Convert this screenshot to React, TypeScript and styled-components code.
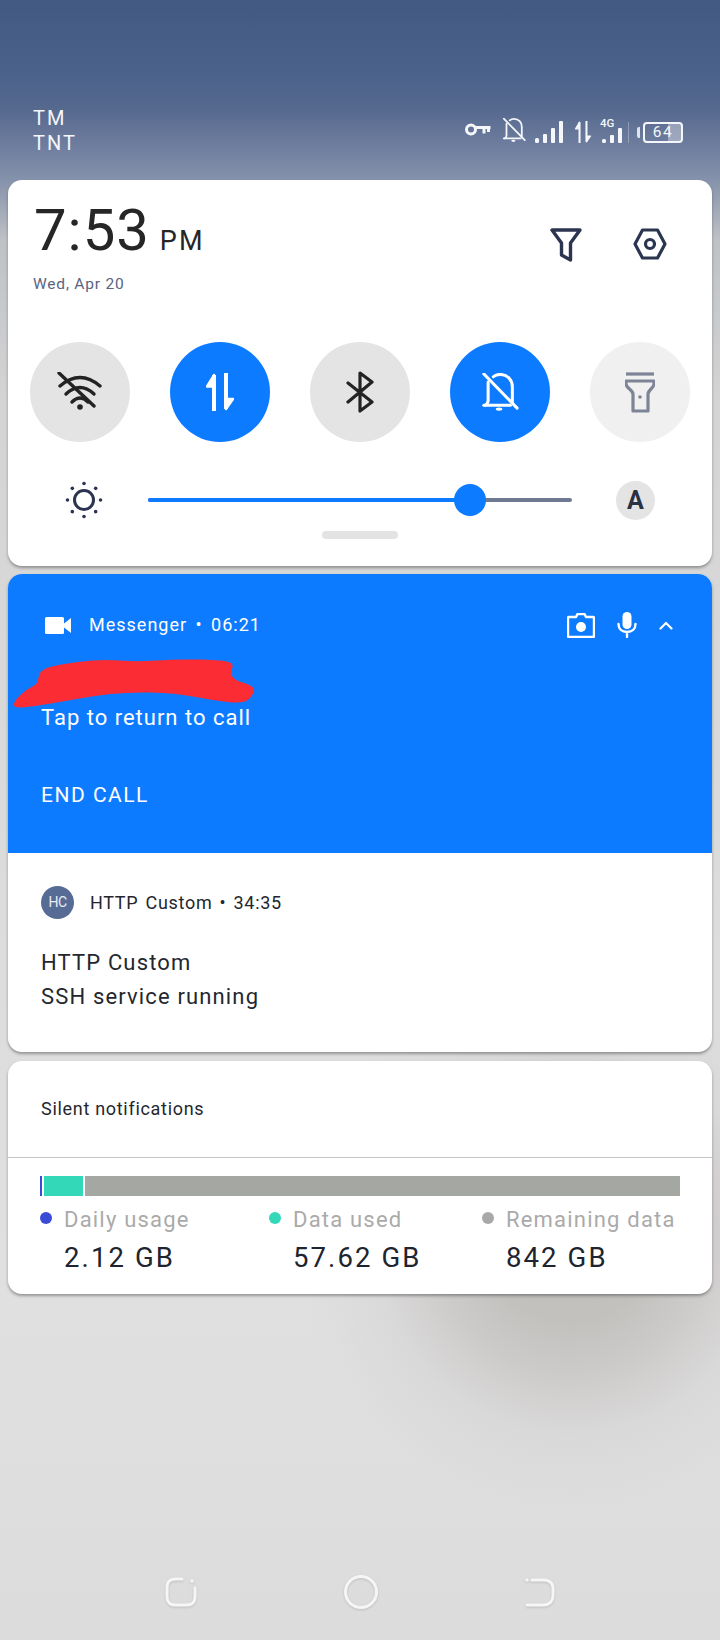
import React from "react";
import styled, { createGlobalStyle } from "styled-components";

const Global = createGlobalStyle`
  html, body { margin: 0; padding: 0; }
  body { font-family: Roboto, "Liberation Sans", sans-serif; }
`;

const Page = styled.div`
  position: relative;
  width: 720px;
  height: 1640px;
  overflow: hidden;
  display: flex;
  flex-direction: column;
  background: linear-gradient(180deg, #425a82 0, #4a6189 70px, #56698f 110px, #7180a0 150px, #8592ab 180px, #bfc1c5 240px, #d4d4d4 400px, #dcdcdc 900px, #e0e0e0 1300px, #dcdcdc 1640px);
  &::before {
    content: "";
    position: absolute;
    left: 300px;
    top: 970px;
    width: 540px;
    height: 540px;
    border-radius: 50%;
    background: radial-gradient(circle closest-side, #bebbb8 0, #c3c1be 30%, #cdcbca 50%, rgba(216, 215, 215, 0.75) 72%, rgba(222, 222, 222, 0) 100%);
  }
`;

const StatusBar = styled.header`
  position: relative;
  height: 180px;
  flex: none;
  display: flex;
  justify-content: space-between;
  align-items: flex-start;
  padding: 106px 37px 0 33px;
  box-sizing: border-box;
  color: #f4f6fa;
`;

const Carrier = styled.div`
  font-size: 20px;
  line-height: 25px;
  letter-spacing: 2px;
  font-weight: 400;
`;

const StatusIcons = styled.div`
  display: flex;
  align-items: flex-start;
  margin-top: 12px;
`;

const StatusSvg = styled.svg<{ $left: number; $top: number }>`
  display: block;
  flex: none;
  margin-left: ${(p) => p.$left}px;
  margin-top: ${(p) => p.$top}px;
`;

const Net = styled.div`
  position: relative;
  width: 20px;
  height: 25px;
  margin-left: 10px;
`;

const NetLabel = styled.span`
  display: block;
  font-size: 11.5px;
  line-height: 10px;
  font-weight: 500;
  text-align: left;
  margin-left: -2px;
`;

const Battery = styled.div`
  width: 40px;
  height: 21px;
  margin: 4px 0 0 3px;
  box-sizing: border-box;
  border: 2px solid #f4f6fa;
  border-radius: 4px;
  font-size: 15.5px;
  line-height: 17px;
  text-align: center;
  letter-spacing: 1.5px;
  background: linear-gradient(90deg, transparent 64%, rgba(255, 255, 255, 0.35) 64%);
`;

const BatteryNub = styled.div`
  width: 3px;
  height: 11px;
  margin: 9px 0 0 8px;
  border-radius: 2px 0 0 2px;
  background: #dfe3ea;
`;

const Divider = styled.div`
  width: 1px;
  height: 21px;
  margin: 4px 0 0 6px;
  background: rgba(255, 255, 255, 0.3);
`;

const Card = styled.section<{ $top: number; $height: number }>`
  position: relative;
  margin: ${(p) => p.$top}px 8px 0;
  height: ${(p) => p.$height}px;
  flex: none;
  background: #fff;
  border-radius: 14px;
  overflow: hidden;
  box-shadow: 0 2px 3px rgba(60, 60, 60, 0.45);
`;

const ClockRow = styled.div`
  display: flex;
  justify-content: space-between;
  align-items: flex-start;
  padding: 17px 0 0 26px;
  height: 78px;
  box-sizing: border-box;
`;

const Clock = styled.div`
  display: flex;
  align-items: baseline;
  color: #262626;
  font-size: 58px;
  line-height: 66px;
  font-weight: 400;
  letter-spacing: 1px;
`;

const Meridiem = styled.span`
  font-size: 27px;
  margin-left: 10px;
  letter-spacing: 2px;
  font-weight: 400;
`;

const HeaderIcons = styled.div`
  display: flex;
  gap: 51px;
  padding: 31px 45px 0 0;
`;

const DateLabel = styled.div`
  padding-left: 25px;
  margin-top: 16px;
  font-size: 15.5px;
  line-height: 20px;
  color: #5a6380;
  letter-spacing: 0.8px;
`;

const Toggles = styled.div`
  display: flex;
  justify-content: space-between;
  padding: 0 22px;
  margin-top: 48px;
`;

const Toggle = styled.div<{ $on?: boolean; $faded?: boolean }>`
  width: 100px;
  height: 100px;
  border-radius: 50%;
  display: flex;
  align-items: center;
  justify-content: center;
  background: ${(p) => (p.$on ? "#0d7bff" : p.$faded ? "#f0f0f0" : "#e4e4e4")};
`;

const BrightnessRow = styled.div`
  display: flex;
  align-items: center;
  height: 40px;
  margin-top: 38px;
  padding-left: 57px;
`;

const Slider = styled.div`
  position: relative;
  width: 424px;
  height: 4px;
  margin-left: 45px;
  border-radius: 2px;
  background: #6f7a92;
`;

const SliderFill = styled.div`
  height: 100%;
  border-radius: 2px;
  background: #0d7bff;
`;

const SliderThumb = styled.div`
  position: absolute;
  top: -14px;
  width: 32px;
  height: 32px;
  margin-left: -16px;
  border-radius: 50%;
  background: #0d7bff;
`;

const AutoBadge = styled.div`
  width: 39px;
  height: 39px;
  margin-left: 44px;
  border-radius: 50%;
  background: #e4e4e4;
  color: #2a3145;
  font-size: 25px;
  font-weight: 700;
  line-height: 39px;
  text-align: center;
`;

const Handle = styled.div`
  width: 76px;
  height: 8px;
  margin: 11px auto 0;
  border-radius: 4px;
  background: #e3e3e3;
`;

const CallPanel = styled.div`
  height: 279px;
  box-sizing: border-box;
  padding: 37px 39px 0 33px;
  background: #0d7bff;
  color: #fff;
`;

const CallHeader = styled.div`
  display: flex;
  align-items: center;
  height: 28px;
  padding-left: 4px;
`;

const AppLabel = styled.div<{ $dark?: boolean }>`
  font-size: 18px;
  line-height: 26px;
  letter-spacing: ${(p) => (p.$dark ? 0.7 : 1)}px;
  word-spacing: ${(p) => (p.$dark ? 2 : 3)}px;
  color: ${(p) => (p.$dark ? "#23262e" : "#fff")};
  margin-left: ${(p) => (p.$dark ? 16 : 18)}px;
`;

const CallActions = styled.div`
  display: flex;
  align-items: center;
  gap: 22px;
  margin-left: auto;
`;

const ScribbleMark = styled.svg`
  display: block;
  margin: 20px 0 0 -28px;
`;

const CallText = styled.div`
  font-size: 22px;
  line-height: 26px;
  letter-spacing: 1px;
  margin-top: -4px;
`;

const CallButton = styled.div`
  margin-top: 51px;
  font-size: 21px;
  line-height: 26px;
  letter-spacing: 1.5px;
`;

const ServicePanel = styled.div`
  padding: 33px 33px 0;
`;

const ServiceHeader = styled.div`
  display: flex;
  align-items: center;
`;

const Avatar = styled.div`
  width: 33px;
  height: 33px;
  border-radius: 50%;
  background: #566c95;
  color: #e9edf4;
  font-size: 14px;
  line-height: 33px;
  text-align: center;
  letter-spacing: -0.5px;
`;

const ServiceBody = styled.div`
  margin-top: 27px;
  font-size: 22px;
  line-height: 34px;
  letter-spacing: 1.15px;
  color: #24272e;
`;

const SilentTitle = styled.div`
  height: 97px;
  box-sizing: border-box;
  padding: 35px 0 0 33px;
  font-size: 18px;
  line-height: 26px;
  letter-spacing: 0.7px;
  color: #24272e;
  border-bottom: 1px solid #c4c4c4;
`;

const UsageBar = styled.div`
  display: flex;
  gap: 2px;
  height: 20px;
  margin: 18px 32px 0;
`;

const UsageSegment = styled.div<{ $width: number | string; $color: string }>`
  flex: ${(p) => (p.$width === "auto" ? "1" : `0 0 ${p.$width}px`)};
  background: ${(p) => p.$color};
`;

const Legend = styled.div`
  display: flex;
  margin-top: 10px;
  padding-left: 32px;
`;

const LegendItem = styled.div<{ $width: number }>`
  width: ${(p) => p.$width}px;
  display: grid;
  grid-template-columns: 24px auto;
  align-items: center;
`;

const Dot = styled.span<{ $color: string }>`
  width: 12px;
  height: 12px;
  border-radius: 50%;
  background: ${(p) => p.$color};
  margin-top: -4px;
`;

const LegendLabel = styled.div`
  font-size: 22px;
  line-height: 28px;
  letter-spacing: 1.2px;
  color: #aaaaaa;
  white-space: nowrap;
`;

const LegendValue = styled.div`
  grid-column: 2;
  margin-top: 8px;
  font-size: 27.5px;
  line-height: 32px;
  letter-spacing: 2.1px;
  color: #20242e;
  white-space: nowrap;
`;

const NavBar = styled.nav`
  position: relative;
  margin-top: auto;
  height: 65px;
  flex: none;
  box-sizing: border-box;
  display: flex;
  align-items: center;
  justify-content: space-between;
  padding: 0 165px 31px;
  filter: drop-shadow(0 1px 1px rgba(120, 120, 120, 0.3));
`;

const KeyIcon = () => (
  <StatusSvg $left={0} $top={5} width="26" height="13" viewBox="0 0 26 13" fill="none" stroke="#f4f6fa" strokeWidth="3">
    <circle cx="6" cy="6.500" r="4.500" />
    <path d="M11 4.500h14.500M19 4.500v6M23.500 4.500v4.500" />
  </StatusSvg>
);

const SignalBars = ({ full }: { full?: boolean }) => (
  <svg width={full ? 28 : 20} height={full ? 22 : 15} viewBox={full ? "0 0 28 22" : "0 0 20 15"} fill="#f4f6fa">
    {full ? (
      <>
        <rect x="0" y="17" width="4" height="5" rx="1.500" />
        <rect x="8" y="13" width="4" height="9" rx="1" />
        <rect x="16" y="7" width="4" height="15" rx="1" />
        <rect x="24" y="0" width="4" height="22" rx="1" />
      </>
    ) : (
      <>
        <rect x="0" y="11" width="4" height="4" rx="1.500" />
        <rect x="8" y="7" width="4" height="8" rx="1" />
        <rect x="16" y="0" width="4" height="15" rx="1" />
      </>
    )}
  </svg>
);

const BellOff = ({ size, color, width }: { size: number; color: string; width: number }) => (
  <svg width={size} height={size} viewBox="0 0 38 40" fill="none" stroke={color} strokeWidth={width} strokeLinecap="round" strokeLinejoin="round">
    <path d="M2 1l35 36" />
    <path d="M12 4C14 2 16.500 1.500 19 1.500c8 0 13 6 13 13V31" />
    <path d="M6.500 9.500V29c0 2-1.500 4-3 5" />
    <path d="M2 34h28" />
    <ellipse cx="18" cy="38" rx="3.500" ry="1.800" fill={color} stroke="none" />
  </svg>
);

const DataArrows = ({ w, h, color, sw }: { w: number; h: number; color: string; sw: number }) => (
  <svg width={w} height={h} viewBox="0 0 28 38" fill="none" stroke={color} strokeWidth={sw} strokeLinejoin="round">
    <path d="M8 38V2L1 13.500h7" fill={color} strokeWidth={sw * 0.6} />
    <path d="M8 38V2" />
    <path d="M20 0v36l7-10h-7" fill={color} strokeWidth={sw * 0.6} />
    <path d="M20 0v36" />
  </svg>
);

const Funnel = () => (
  <svg width="32" height="34" viewBox="0 0 32 34" fill="none" stroke="#2b3550" strokeWidth="3.400" strokeLinejoin="round">
    <path d="M2 2h28l-9.500 13v17l-9-5V15z" />
  </svg>
);

const Hexagon = () => (
  <svg width="34" height="32" viewBox="0 0 34 32" fill="none" stroke="#2b3550" strokeWidth="3.200" strokeLinejoin="round">
    <path d="M9.500 2h15L32 16l-7.500 14h-15L2 16z" />
    <circle cx="17" cy="16" r="4.500" />
  </svg>
);

const WifiOff = () => (
  <svg width="46" height="40" viewBox="0 0 46 40" fill="none" stroke="#232323" strokeWidth="3.400" strokeLinecap="round">
    <path d="M2 1l35 33" />
    <path d="M3 14Q23 -3 43 14" />
    <path d="M9 22Q23 9 37 22" />
    <path d="M15 30Q23 22 31 30" />
    <circle cx="23" cy="35" r="2.800" fill="#232323" stroke="none" />
  </svg>
);

const BluetoothMark = () => (
  <svg width="28" height="42" viewBox="0 0 28 42" fill="none" stroke="#232323" strokeWidth="3.200" strokeLinejoin="round" strokeLinecap="round">
    <path d="M2 12l24 19-12 9V2l12 9L2 31" />
  </svg>
);

const Flashlight = () => (
  <svg width="30" height="41" viewBox="0 0 30 41" fill="none" stroke="#7c8496" strokeWidth="3.200" strokeLinejoin="round">
    <path d="M1 2h28" />
    <path d="M1 9h28v3c0 4-6 6-6 10v17H8V22C8 18 1 16 1 12z" />
    <circle cx="15" cy="25" r="1.800" fill="#7c8496" stroke="none" />
  </svg>
);

const Sun = () => (
  <svg width="38" height="38" viewBox="0 0 38 38" fill="#2b3550">
    <circle cx="19" cy="19" r="9.500" fill="none" stroke="#2b3550" strokeWidth="3" />
    {[0, 45, 90, 135, 180, 225, 270, 315].map((a) => (
      <circle
        key={a}
        cx={19 + 16.5 * Math.cos((a * Math.PI) / 180)}
        cy={19 + 16.5 * Math.sin((a * Math.PI) / 180)}
        r="1.800"
      />
    ))}
  </svg>
);

const VideoCam = () => (
  <svg width="26" height="17" viewBox="0 0 26 17" fill="#fff">
    <rect x="0" y="0" width="19" height="17" rx="1.500" />
    <path d="M19 6.500L26 1v15l-7-5.500z" />
  </svg>
);

const CameraIcon = () => (
  <svg width="28" height="25" viewBox="0 0 28 25" fill="none">
    <path d="M9 4l1.500-3h7L19 4h7a1 1 0 0 1 1 1v18a1 1 0 0 1-1 1H2a1 1 0 0 1-1-1V5a1 1 0 0 1 1-1z" stroke="#fff" strokeWidth="2.400" strokeLinejoin="round" />
    <circle cx="14" cy="14" r="5" fill="#fff" />
  </svg>
);

const MicIcon = () => (
  <svg width="20" height="26" viewBox="0 0 20 26" fill="none" stroke="#fff" strokeWidth="2.400" strokeLinecap="round">
    <rect x="5.500" y="0" width="9" height="17" rx="4.500" fill="#fff" stroke="none" />
    <path d="M1.500 12c0 5 3.500 8 8.500 8s8.500-3 8.500-8M10 20v5" />
  </svg>
);

const ChevronUp = () => (
  <svg width="14" height="9" viewBox="0 0 14 9" fill="none" stroke="#fff" strokeWidth="2.200" strokeLinecap="round" strokeLinejoin="round">
    <path d="M1.500 7.500L7 2l5.500 5.500" />
  </svg>
);

// Outline of the hand-drawn marker stroke over the caller's name, smoothed through edge midpoints.
const strokeOutline: [number, number][] = [
  [0, 43], [14, 30], [25, 25], [26, 12], [42, 6], [88, 0], [125, 3], [161, 0], [213, 1], [221, 6], [217, 13],
  [221, 21], [241, 27], [241, 35], [231, 45], [198, 41], [161, 34], [116, 33], [79, 37], [42, 44], [2, 50],
];

const smoothClosedPath = (pts: [number, number][]) => {
  const mid = (a: [number, number], b: [number, number]) => [(a[0] + b[0]) / 2, (a[1] + b[1]) / 2];
  const start = mid(pts[pts.length - 1], pts[0]);
  const segments = pts.map((p, i) => {
    const m = mid(p, pts[(i + 1) % pts.length]);
    return `Q${p[0]} ${p[1]} ${m[0]} ${m[1]}`;
  });
  return `M${start[0]} ${start[1]}${segments.join("")}Z`;
};

const RedactionStroke = () => (
  <ScribbleMark width="242" height="50" viewBox="0 0 242 50">
    <path fill="#fb2c33" d={smoothClosedPath(strokeOutline)} />
  </ScribbleMark>
);

const RecentsKey = () => (
  <svg width="32" height="30" viewBox="0 0 32 30" fill="none" stroke="#f6f6f6" strokeWidth="3" strokeLinecap="round">
    <path d="M17 2H10C5 2 2 5 2 10v10c0 5 3 8 8 8h12c5 0 8-3 8-8v-9" />
    <circle cx="27" cy="4" r="1.800" fill="#f6f6f6" stroke="none" />
  </svg>
);

const HomeKey = () => (
  <svg width="34" height="34" viewBox="0 0 34 34" fill="none" stroke="#f6f6f6" strokeWidth="3">
    <circle cx="17" cy="17" r="15.500" />
  </svg>
);

const BackKey = () => (
  <svg width="30" height="30" viewBox="0 0 30 30" fill="none" stroke="#f6f6f6" strokeWidth="3" strokeLinecap="round">
    <path d="M7 3h12c5 0 9 3 9 8v8c0 5-4 9-9 9H2" />
    <circle cx="2" cy="3" r="1.800" fill="#f6f6f6" stroke="none" />
  </svg>
);

export default function App() {
  return (
    <Page>
      <Global />
      <StatusBar>
        <Carrier>
          TM
          <br />
          TNT
        </Carrier>
        <StatusIcons>
          <KeyIcon />
          <StatusSvg as="div" $left={11} $top={0}>
            <BellOff size={24} color="#f4f6fa" width={3} />
          </StatusSvg>
          <StatusSvg as="div" $left={9} $top={3}>
            <SignalBars full />
          </StatusSvg>
          <StatusSvg as="div" $left={11} $top={3}>
            <DataArrows w={18} h={22} color="#f4f6fa" sw={3.4} />
          </StatusSvg>
          <Net>
            <NetLabel>4G</NetLabel>
            <SignalBars />
          </Net>
          <Divider />
          <BatteryNub />
          <Battery>64</Battery>
        </StatusIcons>
      </StatusBar>

      <Card $top={0} $height={386}>
        <ClockRow>
          <Clock>
            7:53<Meridiem>PM</Meridiem>
          </Clock>
          <HeaderIcons>
            <Funnel />
            <Hexagon />
          </HeaderIcons>
        </ClockRow>
        <DateLabel>Wed, Apr 20</DateLabel>
        <Toggles>
          <Toggle>
            <WifiOff />
          </Toggle>
          <Toggle $on>
            <DataArrows w={28} h={38} color="#fff" sw={4} />
          </Toggle>
          <Toggle>
            <BluetoothMark />
          </Toggle>
          <Toggle $on>
            <BellOff size={38} color="#fff" width={3.2} />
          </Toggle>
          <Toggle $faded>
            <Flashlight />
          </Toggle>
        </Toggles>
        <BrightnessRow>
          <Sun />
          <Slider>
            <SliderFill style={{ width: "76%" }} />
            <SliderThumb style={{ left: "76%" }} />
          </Slider>
          <AutoBadge>A</AutoBadge>
        </BrightnessRow>
        <Handle />
      </Card>

      <Card $top={8} $height={478}>
        <CallPanel>
          <CallHeader>
            <VideoCam />
            <AppLabel>Messenger • 06:21</AppLabel>
            <CallActions>
              <CameraIcon />
              <MicIcon />
              <ChevronUp />
            </CallActions>
          </CallHeader>
          <RedactionStroke />
          <CallText>Tap to return to call</CallText>
          <CallButton>END CALL</CallButton>
        </CallPanel>
        <ServicePanel>
          <ServiceHeader>
            <Avatar>HC</Avatar>
            <AppLabel $dark>HTTP Custom • 34:35</AppLabel>
          </ServiceHeader>
          <ServiceBody>
            HTTP Custom
            <br />
            SSH service running
          </ServiceBody>
        </ServicePanel>
      </Card>

      <Card $top={9} $height={233}>
        <SilentTitle>Silent notifications</SilentTitle>
        <UsageBar>
          <UsageSegment $width={2} $color="#3a4bd6" />
          <UsageSegment $width={39} $color="#33d8b8" />
          <UsageSegment $width="auto" $color="#a5a7a3" />
        </UsageBar>
        <Legend>
          <LegendItem $width={229}>
            <Dot $color="#3a4bd6" />
            <LegendLabel>Daily usage</LegendLabel>
            <LegendValue>2.12 GB</LegendValue>
          </LegendItem>
          <LegendItem $width={213}>
            <Dot $color="#33d8b8" />
            <LegendLabel>Data used</LegendLabel>
            <LegendValue>57.62 GB</LegendValue>
          </LegendItem>
          <LegendItem $width={200}>
            <Dot $color="#a8a8a8" />
            <LegendLabel>Remaining data</LegendLabel>
            <LegendValue>842 GB</LegendValue>
          </LegendItem>
        </Legend>
      </Card>

      <NavBar>
        <RecentsKey />
        <HomeKey />
        <BackKey />
      </NavBar>
    </Page>
  );
}
